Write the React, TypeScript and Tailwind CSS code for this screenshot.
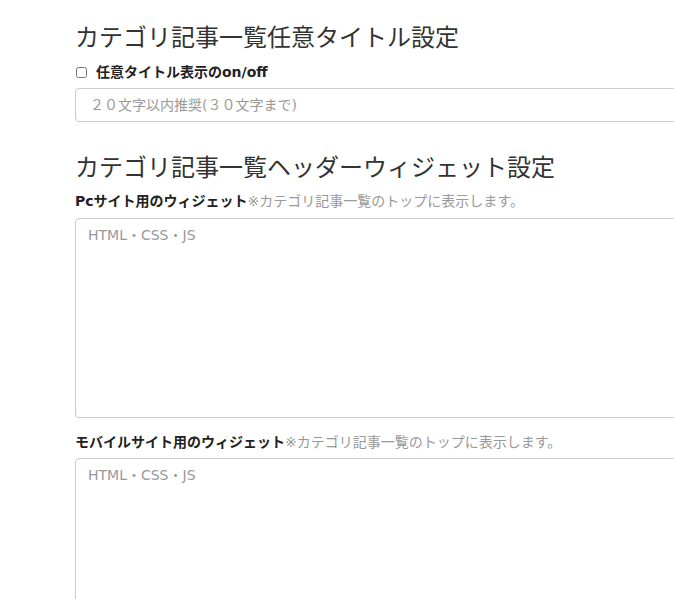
export default function App() {
  const font = "font-['DejaVu_Sans','Noto_Sans_CJK_JP',sans-serif]";

  return (
    <div className={`h-[599px] overflow-hidden bg-white ${font}`}>
      <div className="w-[700px] pl-[75px] pt-[22px]">
        <h2 className="text-[24px] leading-[32px] font-normal text-[#333]">
          カテゴリ記事一覧任意タイトル設定
        </h2>
        <label className="mt-[8px] flex items-center gap-[9px] text-[14px] leading-[20px] font-bold text-[#222]">
          <input type="checkbox" className="ml-[1px] h-[11px] w-[11px]" />
          任意タイトル表示のon/off
        </label>
        <input
          type="text"
          placeholder="２０文字以内推奨(３０文字まで)"
          className="mt-[6px] block h-[34px] w-full rounded-[4px] border border-[#ccc] px-[14px] text-[14px] placeholder:text-[#999]"
        />

        <h2 className="mt-[30px] text-[24px] leading-[32px] font-normal text-[#333]">
          カテゴリ記事一覧ヘッダーウィジェット設定
        </h2>
        <p className="mt-[7px] text-[14px] leading-[20px] text-[#222]">
          <span className="font-bold">Pcサイト用のウィジェット</span>
          <span className="text-[#999]">※カテゴリ記事一覧のトップに表示します。</span>
        </p>
        <textarea
          placeholder="HTML・CSS・JS"
          className="mt-[7px] block h-[200px] w-full resize-none rounded-[4px] border border-[#ccc] px-[12px] py-[6px] text-[14px] leading-[20px] placeholder:text-[#999]"
        />

        <p className="mt-[14px] text-[14px] leading-[20px] text-[#222]">
          <span className="font-bold">モバイルサイト用のウィジェット</span>
          <span className="text-[#999]">※カテゴリ記事一覧のトップに表示します。</span>
        </p>
        <textarea
          placeholder="HTML・CSS・JS"
          className="mt-[6px] block h-[200px] w-full resize-none rounded-[4px] border border-[#ccc] px-[12px] py-[6px] text-[14px] leading-[20px] placeholder:text-[#999]"
        />
      </div>
    </div>
  );
}
